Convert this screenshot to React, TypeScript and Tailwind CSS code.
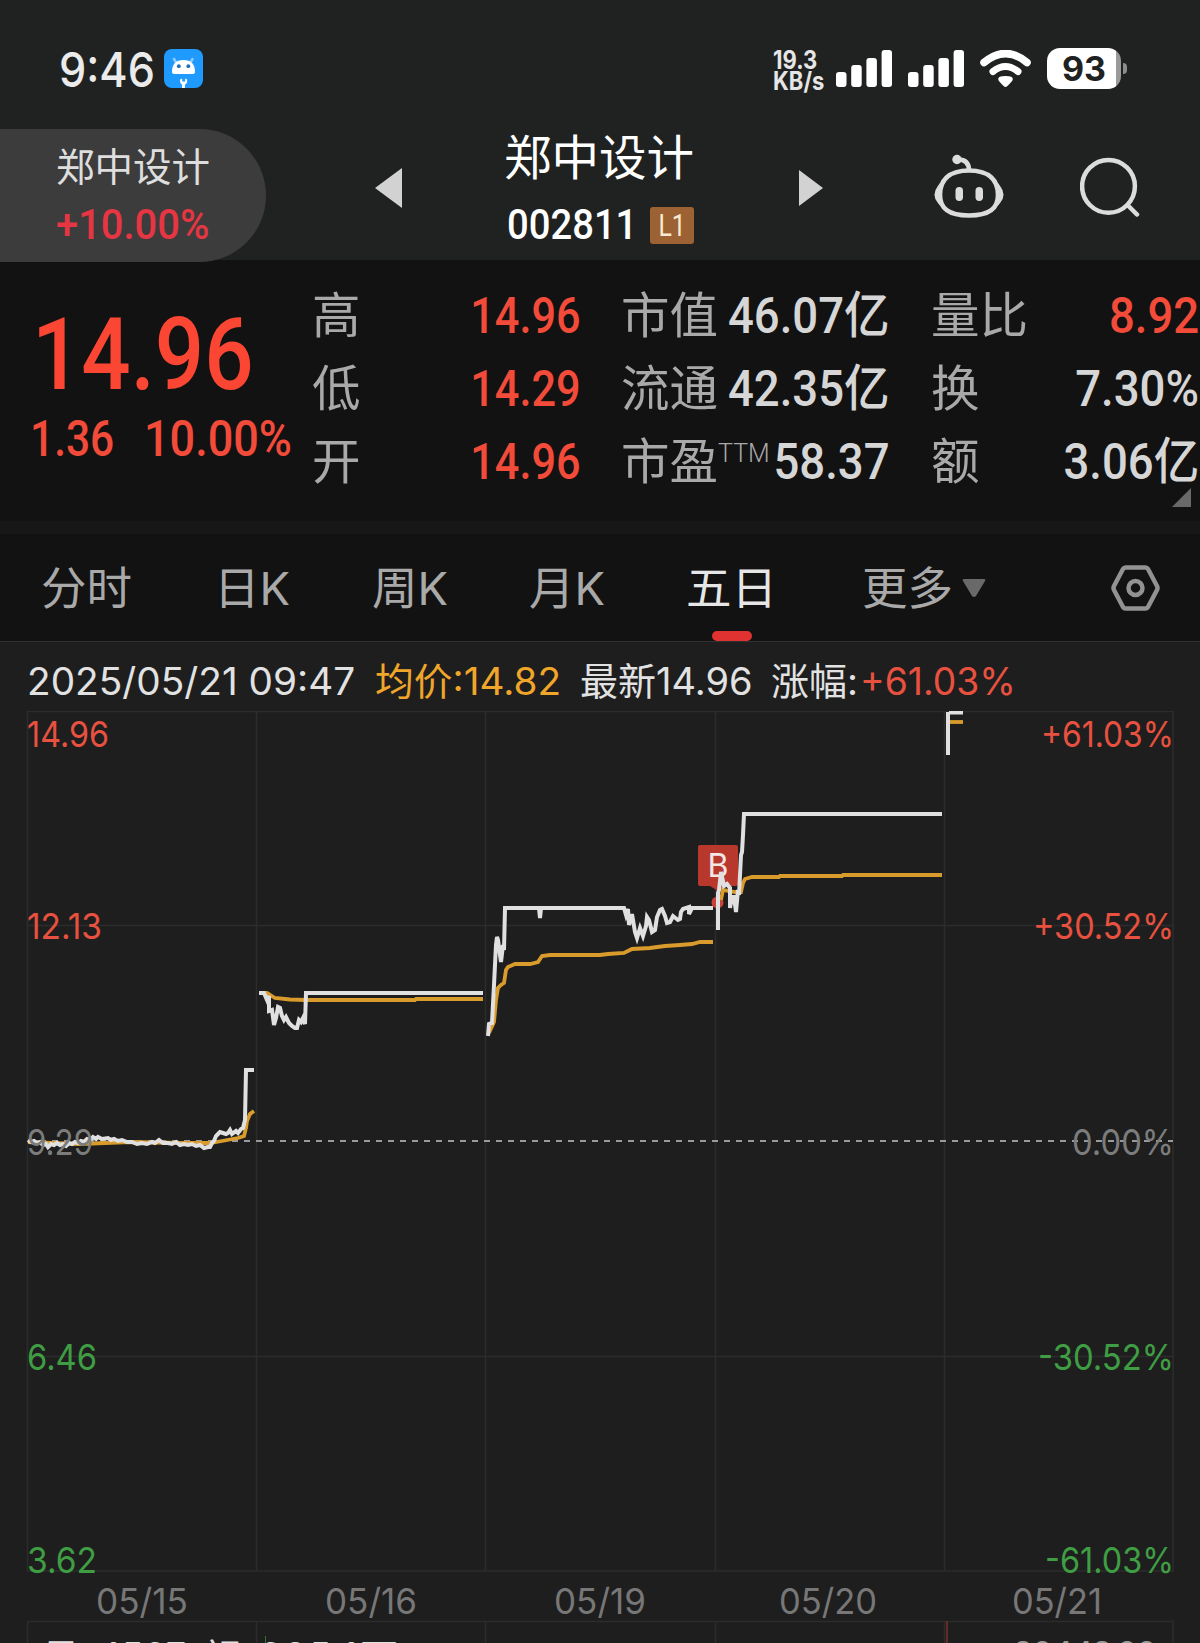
import { clsx } from 'clsx'

type Stat = { label: string; value: string; sup?: string; up?: boolean }

const prices: Stat[] = [
  { label: '高', value: '14.96', up: true },
  { label: '低', value: '14.29', up: true },
  { label: '开', value: '14.96', up: true },
]

const caps: Stat[] = [
  { label: '市值', value: '46.07亿' },
  { label: '流通', value: '42.35亿' },
  { label: '市盈', value: '58.37', sup: 'TTM' },
]

const ratios: Stat[] = [
  { label: '量比', value: '8.92', up: true },
  { label: '换', value: '7.30%' },
  { label: '额', value: '3.06亿' },
]

const tabs = [
  { name: '分时', box: 'ml-[41px] w-[173px]' },
  { name: '日K', box: 'w-[158px]' },
  { name: '周K', box: 'w-[157px]' },
  { name: '月K', box: 'w-[157px]' },
  { name: '五日', box: 'w-[176px]', active: true },
  { name: '更多', box: 'w-[100px]' },
]

const columns = [27.5, 256.5, 485.5, 715.5, 944.5, 1173]

const dates = [
  { text: '05/15', x: 97, w: 90 },
  { text: '05/16', x: 326, w: 90 },
  { text: '05/19', x: 555, w: 90 },
  { text: '05/20', x: 780, w: 96 },
  { text: '05/21', x: 1013, w: 88 },
]

const axis = [
  { left: '14.96', lw: 80, right: '+61.03%', rx: 1043, y: 746.5, color: '#e8513f' },
  { left: '12.13', lw: 73, right: '+30.52%', rx: 1035, y: 938.5, color: '#e8513f' },
  { left: '9.29', lw: 64, right: '0.00%', rx: 1074, y: 1154.5, color: '#7c7c7c' },
  { left: '6.46', lw: 68, right: '-30.52%', rx: 1040, y: 1369.5, color: '#3f9d44' },
  { left: '3.62', lw: 68, right: '-61.03%', rx: 1047, y: 1573, color: '#3f9d44' },
]

const pricePaths = [
  'M28 1140 L31 1142 34 1141 37 1143 40 1142 43 1145 46 1144 48 1147 51 1144 54 1145 57 1143 60 1145 63 1144 66 1146 69 1143 72 1144 75 1142 78 1143 81 1141 84 1142 87 1139 90 1140 93 1137 96 1139 98 1137 102 1139 108 1138 111 1140 114 1139 118 1141 122 1140 127 1142 132 1142 137 1144 142 1143 147 1144 152 1142 155 1143 159 1140 163 1143 168 1143 172 1144 176 1142 180 1145 184 1144 188 1145 192 1144 196 1146 200 1145 204 1148 208 1147 210 1147 212 1143 214 1141 216 1136 218 1134 220 1132 223 1133 226 1134 228 1133 230 1130 232 1134 236 1131 238 1133 241 1129 243 1128 245 1120 246 1070 247 1070 254 1070',
  'M259 993 L264 993 267 1000 269 996 269 1011 272 1010 274 1025 276 1018 278 1007 280 1008 282 1016 284 1020 286 1017 289 1023 292 1026 295 1028 297 1028 299 1020 301 1022 303 1018 305 1024 306 993 307 993 483 993',
  'M488 1036 L489 1024 492 1023 494 985 496 945 497 937 498 940 501 962 503 945 504 950 505 908 624 908 626 915 628 909 629 925 632 914 635 932 637 938 640 928 643 936 646 926 647 917 649 920 652 932 655 930 657 917 660 910 662 909 665 916 667 923 670 922 673 916 678 920 680 919 681 912 683 909 689 907 689 914 692 908 713 908',
  'M539 908 L540 918 541 908',
  'M718 930 L718 893 719 890 721 872 724 886 727 884 730 888 730 908 732 897 734 897 736 912 738 890 739 895 741 855 742 852 743 835 744 814 745 814 942 814',
  'M948 755 L948 712',
  'M949 712.500H963',
]

const averagePaths = [
  'M28 1142 L50 1143 80 1144 130 1142 180 1143 210 1143 222 1141 238 1138 244 1136 246 1128 247 1121 250 1114 254 1111',
  'M259 993 L267 993 275 998 290 999.5 305 1000 415 1000 416 999 483 999',
  'M489 1033 L494 1022 496 1000 498 988 501 985 504 983 506 970 508 967 515 964 530 964 538 962 542 956 550 955 600 955 608 954 624 953 632 949 650 948 665 946 680 945 692 944 700 942 713 942',
  'M721 900 L723 890 735 892 741 892 743 883 745 879 752 877 779 877 780 876 842 876 843 875 942 875',
  'M950 722 L963 722',
]

function Signal() {
  return (
    <svg width="56" height="37" viewBox="0 0 56 37" fill="#fff">
      <rect x="0" y="22" width="10.5" height="15" rx="3" />
      <rect x="15.2" y="15" width="10.5" height="22" rx="3" />
      <rect x="30.4" y="8" width="10.5" height="29" rx="3" />
      <rect x="45.6" y="0" width="10.5" height="37" rx="3" />
    </svg>
  )
}

function StatusBar() {
  return (
    <div className="flex h-[129px] items-start pt-[45px] pl-[59px]">
      <span className="mt-0.5 w-[105px] origin-left scale-x-[.9] text-[48px] leading-[46px] font-medium text-[#ebebeb]">9:46</span>
      <svg className="mt-1 shrink-0" width="39" height="39" viewBox="0 0 39 39">
        <rect width="39" height="39" rx="8" fill="#1f9bff" />
        <path d="M10 10l3 5M28.500 10l-3 5" stroke="#8fcbff" strokeWidth="2.600" strokeLinecap="round" />
        <path d="M8 23q0-12 11.500-12T31 23q0 2-2 2H10q-2 0-2-2z" fill="#fff" />
        <circle cx="14.800" cy="17.200" r="1.900" fill="#1b6fb8" />
        <circle cx="24.300" cy="17.200" r="1.900" fill="#1b6fb8" />
        <path d="M16 30.500q0 4.500 2 5V39h3v-3.500q2.200-.5 2.200-5l-2-1v3h-3v-3z" fill="#fff" />
      </svg>
      <div className="mt-[5px] ml-[570px] w-[63px] text-[25px] leading-[21px] font-bold text-[#e6e6e6]">
        <div className="w-max origin-left scale-x-[.88]">19.3</div>
        <div className="w-max origin-left scale-x-[.88]">KB/s</div>
      </div>
      <div className="mt-[5px] flex gap-4">
        <Signal />
        <Signal />
      </div>
      <svg className="mt-[5px] ml-4 shrink-0" width="51" height="38" viewBox="0 0 51 38" fill="none" stroke="#fff">
        <path d="M4 12.500Q25.500-5.500 47 12.500" strokeWidth="7.500" strokeLinecap="round" />
        <path d="M13 21.500q12.500-10 25 0" strokeWidth="7" strokeLinecap="round" />
        <path d="M25.500 36q-1 0-6-6-1.500-3 6-3t6 3q-5 6-6 6z" fill="#fff" strokeWidth="2" />
      </svg>
      <div className="mt-[3px] ml-4 flex items-center">
        <div className="h-[41px] w-[74px] overflow-hidden rounded-[13px] bg-[linear-gradient(to_right,#fff_69px,#9a9a9a_69px)] pl-[15px] text-[34px] leading-[41px] font-bold text-[#202221]">
          93
        </div>
        <div className="ml-0.5 h-[11px] w-1 rounded-r-full bg-[#8c8c8c]" />
      </div>
    </div>
  )
}

function Header() {
  return (
    <div className="relative z-10 flex h-[131px] items-start font-['Roboto','Noto_Sans_CJK_SC',sans-serif]">
      <div className="h-[133px] w-[266px] shrink-0 rounded-r-full bg-[#3c3c3c] pl-14">
        <div className="mt-[19px] text-[38.5px] leading-[40px] text-[#dedede]">郑中设计</div>
        <div className="mt-[17px] w-max origin-left scale-x-[.95] text-[42px] leading-[40px] font-medium text-[#e63543]">+10.00%</div>
      </div>
      <svg className="mt-[38px] ml-[109px] shrink-0" width="27" height="42">
        <path d="M0 21L27 1v40z" fill="#d2d2d2" />
      </svg>
      <div className="ml-[102px] w-[295px]">
        <div className="mt-0.5 text-[47.5px] leading-[56px] whitespace-nowrap text-white">郑中设计</div>
        <div className="mt-[18px] flex items-center">
          <span className="ml-[3px] w-[143px] origin-left scale-x-[.91] text-[42px] leading-[40px] font-medium text-white">002811</span>
          <span className="h-[37px] w-11 rounded-[3px] bg-[#9c6233] text-center text-[31px] leading-[37px] text-[#f8ead2]">
            <span className="inline-block scale-x-[.8]">L1</span>
          </span>
        </div>
      </div>
      <svg className="mt-[39px] -ml-px shrink-0" width="25" height="40">
        <path d="M1 2v36l24-18z" fill="#d2d2d2" />
      </svg>
      <svg className="mt-[24px] ml-[110px] shrink-0" width="72" height="68" viewBox="0 0 72 68" fill="none" stroke="#dcdcdc" strokeWidth="4.600">
        <path d="M36 17.500c21 0 29 10.500 29 24.500 0 13-8 20.500-29 20.500S7 55 7 42c0-14 8-24.500 29-24.500z" />
        <path d="M25 6.500c8 0 11 4 11 11" />
        <circle cx="24" cy="6.500" r="4.700" fill="#dcdcdc" stroke="none" />
        <rect x="22.500" y="34" width="7.500" height="14" rx="3.700" fill="#dcdcdc" stroke="none" />
        <rect x="42.500" y="34" width="7.500" height="14" rx="3.700" fill="#dcdcdc" stroke="none" />
        <path d="M6 33.500q-6.500 8.500 0 16zM66 33.500q6.500 8.500 0 16z" fill="#dcdcdc" strokeWidth="2.500" />
      </svg>
      <svg className="mt-[28px] ml-[75px] shrink-0" width="60" height="60" viewBox="0 0 60 60" fill="none" stroke="#dcdcdc" strokeWidth="4.500">
        <circle cx="28.500" cy="29.300" r="26.400" />
        <path d="M48 48.500l9 9" strokeLinecap="round" />
      </svg>
    </div>
  )
}

function StatColumn({ stats, className, fit }: { stats: Stat[]; className: string; fit: string }) {
  return (
    <div className={clsx('flex flex-col', className)}>
      {stats.map((stat) => (
        <div key={stat.label} className="flex h-[73px] items-center justify-between text-[48.5px] leading-[73px] whitespace-nowrap">
          <span className="flex text-[#a9a9a9]">
            {stat.label}
            {stat.sup && <sup className="top-0 -mt-0.5 w-0 text-[25px] leading-[60px] font-light">{stat.sup}</sup>}
          </span>
          <span className={clsx('-ml-8 origin-right text-[50px] font-medium', fit, stat.up ? 'text-[#f24b3a]' : 'text-[#d6d6d6]')}>
            {stat.value}
          </span>
        </div>
      ))}
    </div>
  )
}

function Quote() {
  return (
    <div className="relative flex h-[261px] bg-[#121212] font-['Roboto','Noto_Sans_CJK_SC',sans-serif]">
      <div className="w-[312px] shrink-0 text-[#fb4633]">
        <div className="mt-[45px] ml-8 w-max origin-left scale-x-[.86] text-[101px] leading-[100px] font-medium">14.96</div>
        <div className="mt-[9px] flex h-[50px] text-[50px] leading-[50px] font-medium text-[#f24b3a]">
          <span className="ml-[30px] w-[114px] origin-left scale-x-[.85]">1.36</span>
          <span className="w-max origin-left scale-x-[.9]">10.00%</span>
        </div>
      </div>
      <StatColumn stats={prices} className="mt-5 w-[269px]" fit="scale-x-[.865]" />
      <StatColumn stats={caps} className="mt-5 ml-10 w-[269px]" fit="scale-x-[.91]" />
      <StatColumn stats={ratios} className="mt-5 ml-[41px] w-[268px]" fit="scale-x-[.91]" />
      <svg className="absolute right-[9px] bottom-[14px]" width="19" height="19">
        <path d="M19 0v19H0z" fill="#696969" />
      </svg>
    </div>
  )
}

function Tabs() {
  return (
    <div className="flex h-[107px] bg-[#121212] text-[45.5px] leading-[109px] text-[#a9a9a9]">
      {tabs.map((tab) => (
        <div key={tab.name} className={clsx('relative shrink-0 whitespace-nowrap', tab.box, tab.active && 'text-[#e6e6e6]')}>
          {tab.name}
          {tab.active && <span className="absolute bottom-0 left-[26px] h-[10px] w-10 rounded-full bg-[#e03231]" />}
        </div>
      ))}
      <svg className="mt-[44px] shrink-0" width="24" height="20">
        <path d="M2 1h20q2 0 1 2l-9 15q-2 2-4 0L1 3q-1-2 1-2z" fill="#696969" />
      </svg>
      <svg className="mt-[31px] ml-[125px] shrink-0" width="49" height="46" viewBox="0 0 49 46" fill="none" stroke="#929292" strokeWidth="4.500" strokeLinejoin="round">
        <path d="M14.500 2.500h20q1.500 0 2.500 1.500l9 17q1 2 0 4l-9 17q-1 1.500-2.500 1.500h-20q-1.500 0-2.500-1.500L3 25q-1-2 0-4l9-17q1-1.500 2.500-1.500z" />
        <circle cx="24.500" cy="23" r="7" />
      </svg>
    </div>
  )
}

function Chart() {
  return (
    <svg className="block" width="1200" height="932" viewBox="0 711 1200 932">
      <g stroke="#2c2c2c" strokeWidth="1.500" fill="none">
        <path d="M27 711.500H1174M27 925.500H1174M27 1356.500H1174M27 1571H1174M27 1621.500H1174" />
        {columns.map((x) => (
          <path key={x} d={`M${x} 711V1571M${x} 1621V1643`} />
        ))}
      </g>
      <path d="M28 1141H1173" stroke="#9a9a9a" strokeWidth="1.800" strokeDasharray="6 6" />
      <path d="M698 847q0-2 2-2h36q2 0 2 2v37q0 2-2 2h-10l-8 5-8-5h-10q-2 0-2-2z" fill="#b9382d" />
      <circle cx="717.500" cy="902.500" r="6" fill="#c8443a" />
      <text x="707.500" y="877" fontSize="32" textLength="21" lengthAdjust="spacingAndGlyphs" fill="#f3e6e4">B</text>
      {averagePaths.map((d) => (
        <path key={d} d={d} fill="none" stroke="#d99b2b" strokeWidth="3.800" />
      ))}
      {pricePaths.map((d) => (
        <path key={d} d={d} fill="none" stroke="#e0e0e0" strokeWidth="4" />
      ))}
      <g fontSize="36">
        {axis.map((row) => (
          <g key={row.left} fill={row.color}>
            <text x="27" y={row.y} textLength={row.lw + 2} lengthAdjust="spacingAndGlyphs">{row.left}</text>
            <text x={row.rx - 2} y={row.y} textLength={1176 - row.rx} lengthAdjust="spacingAndGlyphs">{row.right}</text>
          </g>
        ))}
        {dates.map((date) => (
          <text key={date.text} x={date.x - 1} y="1614" fill="#777" textLength={date.w + 2} lengthAdjust="spacingAndGlyphs">
            {date.text}
          </text>
        ))}
      </g>
      <path d="M265.500 1636V1643" stroke="#2c7a31" strokeWidth="1" />
      <path d="M947 1621V1643" stroke="#7a322d" strokeWidth="1.500" />
      <g fontSize="36" fill="#e0e0e0">
        <text x="42" y="1672" fontSize="38">量</text>
        <text x="98" y="1668" textLength="88">4567</text>
        <text x="202" y="1671" fontSize="38">额</text>
        <text x="259" y="1668" textLength="98">685.1</text>
        <text x="360" y="1671" fontSize="38">万</text>
        <text x="1012" y="1667" fill="#9a9a9a" textLength="146">20448.00</text>
      </g>
    </svg>
  )
}

export default function App() {
  return (
    <div className="h-[1643px] w-[1200px] overflow-hidden bg-[#1e1e1e] font-['Inter','Noto_Sans_CJK_SC',sans-serif]">
      <div className="bg-[#202221]">
        <StatusBar />
        <Header />
      </div>
      <Quote />
      <div className="h-[13px] bg-[#171717]" />
      <Tabs />
      <div className="flex h-[70px] border-t border-[#313131] text-[38px] leading-[79px] whitespace-nowrap text-[#e2e2e2]">
        <span className="ml-[27px] w-[348px] origin-left scale-x-[1.02]">2025/05/21 09:47</span>
        <span className="w-[205px] origin-left scale-x-[1.02] text-[#f0a62a]">均价:14.82</span>
        <span className="w-[191px] origin-left">最新14.96</span>
        <span className="w-[89px]">涨幅:</span>
        <span className="origin-left scale-x-[.98] text-[#e8513f]">+61.03%</span>
      </div>
      <Chart />
    </div>
  )
}
